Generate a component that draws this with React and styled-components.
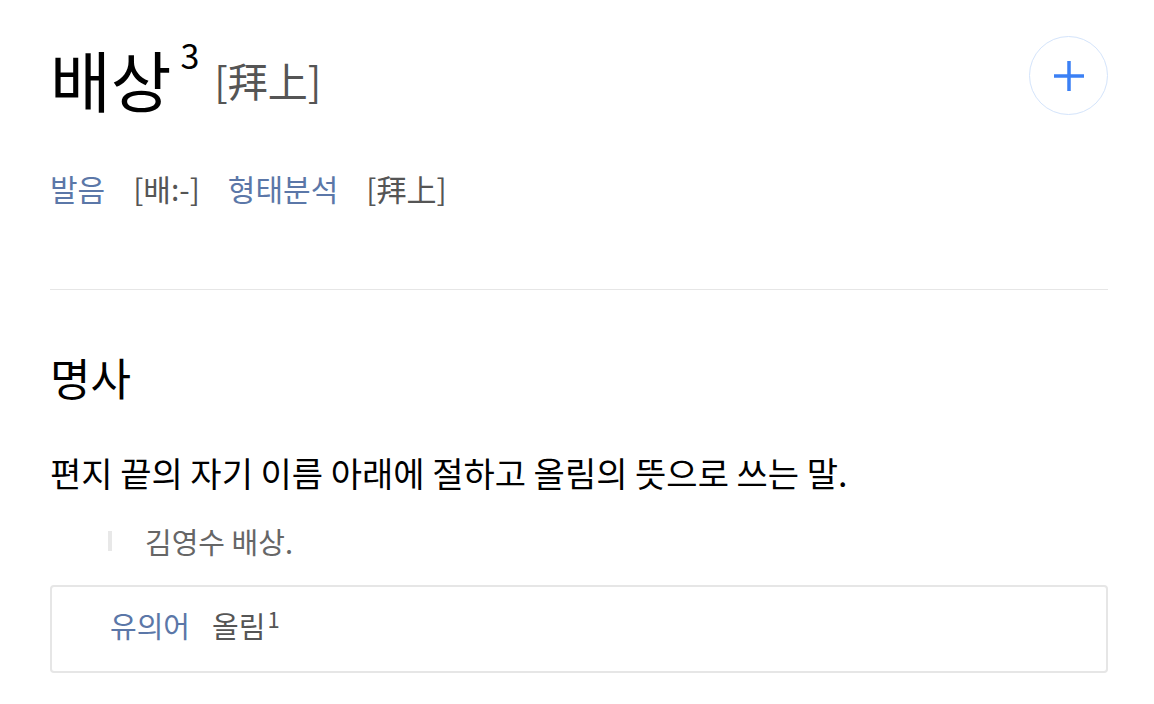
import React from 'react'
import styled, { createGlobalStyle } from 'styled-components'

const Global = createGlobalStyle`
    html, body {
        margin: 0;
        padding: 0;
        background: #fff;
    }
    body {
        font-family: "Noto Sans CJK KR", "Noto Sans", sans-serif;
        color: #000;
    }
`

const Page = styled.div`
    padding: 36px 46px 0 50px;
`

const Head = styled.div`
    display: flex;
    justify-content: space-between;
    align-items: flex-start;
`

const Word = styled.h1`
    margin: 3px 0 0;
    font-size: 66px;
    font-weight: 400;
    line-height: 1.2;
    white-space: nowrap;
`

const Sup = styled.sup`
    font-size: ${p => p.size || 34}px;
    vertical-align: ${p => p.lift || 38}px;
    line-height: 0;
    margin-left: ${p => p.gap || 9}px;
`

const Hanja = styled.span`
    font-size: 40px;
    color: #555;
    margin-left: 15px;
    vertical-align: 10px;
`

const AddButton = styled.button`
    width: 79px;
    height: 79px;
    border-radius: 50%;
    border: 1.5px solid #d4e4fb;
    background: #fff;
    display: flex;
    align-items: center;
    justify-content: center;
    padding: 0;
`

const Info = styled.div`
    display: flex;
    align-items: center;
    gap: 28px;
    font-size: 30px;
    line-height: 1.2;
    margin-top: 52px;
    padding-bottom: 83px;
    border-bottom: 1.5px solid #e6e6e6;
`

const Label = styled.span`
    color: #5b77a8;
`

const Value = styled.span`
    color: #555;
`

const Pos = styled.h2`
    margin: 61px 0 0;
    font-size: 44px;
    font-weight: 400;
    line-height: 1.2;
`

const Def = styled.p`
    margin: 49px 0 0;
    font-size: 34px;
    line-height: 1.2;
`

const Example = styled.div`
    margin: 30px 0 0 58px;
    display: flex;
    align-items: center;
    gap: 33px;
    font-size: 29px;
    line-height: 1.2;
    color: #666;
`

const Bar = styled.span`
    width: 4px;
    height: 20px;
    background: #e8e8e8;
`

const Box = styled.div`
    margin-top: 26px;
    border: 2px solid #e6e6e6;
    border-radius: 4px;
    padding: 21px 58px 29px;
    font-size: 29px;
    line-height: 1.2;
    display: flex;
    gap: 22px;
    align-items: baseline;
`

export default function App() {
    return (
        <Page>
            <Global />
            <Head>
                <Word>
                    배상<Sup>3</Sup>
                    <Hanja>[拜上]</Hanja>
                </Word>
                <AddButton>
                    <svg width="34" height="34" viewBox="0 0 34 34">
                        <path d="M17 2v30M2 17h30" stroke="#3b80f5" strokeWidth="3.5" />
                    </svg>
                </AddButton>
            </Head>
            <Info>
                <Label>발음</Label>
                <Value>[배:-]</Value>
                <Label>형태분석</Label>
                <Value>[拜上]</Value>
            </Info>
            <Pos>명사</Pos>
            <Def>편지 끝의 자기 이름 아래에 절하고 올림의 뜻으로 쓰는 말.</Def>
            <Example>
                <Bar />
                김영수 배상.
            </Example>
            <Box>
                <Label>유의어</Label>
                <Value>올림<Sup size={22} lift={10} gap={2}>1</Sup></Value>
            </Box>
        </Page>
    )
}
